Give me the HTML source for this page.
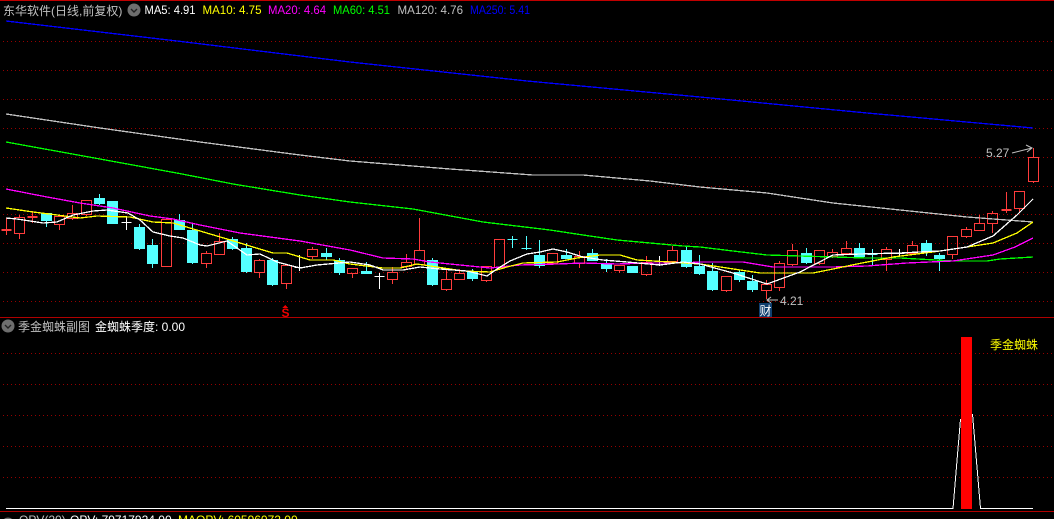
<!DOCTYPE html>
<html><head><meta charset="utf-8"><style>
html,body{margin:0;padding:0;background:#000;width:1054px;height:519px;overflow:hidden}
svg{display:block}
text{font-family:"Liberation Sans","WenQuanYi Zen Hei","Noto Sans CJK SC",sans-serif;font-size:12px}
</style></head><body>
<svg width="1054" height="519" viewBox="0 0 1054 519" xmlns="http://www.w3.org/2000/svg">
<rect width="1054" height="519" fill="#000"/>
<g shape-rendering="crispEdges">
<rect x="0" y="0" width="1054" height="1" fill="#c00000"/>
<rect x="0" y="317" width="1054" height="1" fill="#b00000"/>
<rect x="0" y="511" width="1054" height="1" fill="#b00000"/>
<path stroke="#960000" stroke-dasharray="1 3" fill="none" d="M3 41.5H1054M3 70.5H1054M3 99.5H1054M3 128.5H1054M3 157.5H1054M3 186.5H1054M3 214.5H1054M3 243.5H1054M3 272.5H1054M3 301.5H1054M3 353.5H1054M3 384.5H1054M3 415.5H1054M3 446.5H1054M3 477.5H1054"/>
<path fill="none" stroke="#ff3c3c" d="M14.5 217.5h10v16h-10zM19.5 215V217M19.5 234V239M54.5 216.5h10v8h-10zM59.5 224V230M67.5 213.5h10v5h-10zM72.5 205V213M72.5 218V220M81.5 200.5h10v14h-10zM86.5 214V216M161.5 219.5h10v47h-10zM166.5 218V219M201.5 253.5h10v10h-10zM206.5 251V253M206.5 263V268M214.5 241.5h10v13h-10zM219.5 233V241M254.5 260.5h10v12h-10zM259.5 259V260M259.5 272V278M281.5 265.5h10v18h-10zM286.5 283V289M307.5 249.5h10v7h-10zM312.5 247V249M312.5 256V259M347.5 268.5h10v5h-10zM352.5 273V278M387.5 272.5h10v7h-10zM392.5 267V272M392.5 279V284M401.5 262.5h10v4h-10zM406.5 254V262M406.5 266V270M414.5 250.5h10v14h-10zM419.5 218V250M441.5 279.5h10v10h-10zM446.5 270V279M446.5 289V291M454.5 273.5h10v6h-10zM459.5 269V273M481.5 266.5h10v14h-10zM486.5 280V282M494.5 239.5h10v28h-10zM547.5 253.5h10v10h-10zM574.5 256.5h10v7h-10zM579.5 251V256M579.5 263V268M614.5 265.5h10v5h-10zM619.5 270V273M641.5 262.5h10v12h-10zM646.5 256V262M646.5 274V276M667.5 250.5h10v11h-10zM672.5 246V250M721.5 276.5h10v14h-10zM726.5 290V292M761.5 284.5h10v6h-10zM766.5 280V284M766.5 290V299M774.5 263.5h10v24h-10zM779.5 261V263M779.5 287V291M787.5 250.5h10v14h-10zM792.5 244V250M792.5 264V266M814.5 250.5h10v13h-10zM819.5 263V265M827.5 252.5h10v4h-10zM832.5 249V252M832.5 256V258M841.5 248.5h10v5h-10zM846.5 241V248M881.5 249.5h10v10h-10zM886.5 247V249M886.5 259V271M907.5 245.5h10v8h-10zM912.5 241V245M947.5 236.5h10v18h-10zM952.5 254V259M961.5 229.5h10v7h-10zM966.5 227V229M966.5 236V238M974.5 223.5h10v7h-10zM979.5 215V223M987.5 213.5h10v10h-10zM992.5 211V213M992.5 223V233M1014.5 191.5h10v17h-10zM1019.5 208V213M1028.5 157.5h10v24h-10zM1033.5 148V157M1033.5 181V183M6.5 218V235M1.5 229.5h10M1.5 230.5h10M32.5 211V223M27.5 216.5h10M27.5 217.5h10M1006.5 192V213M1001.5 209.5h10M1001.5 210.5h10"/>
<path fill="#54ffff" stroke="#54ffff" d="M41.5 213.5h10v7h-10zM46.5 220V227M94.5 198.5h10v5h-10zM99.5 194V198M99.5 203V205M107.5 201.5h10v22h-10zM134.5 227.5h10v21h-10zM139.5 224V227M139.5 248V250M147.5 245.5h10v18h-10zM152.5 239V245M152.5 263V268M174.5 220.5h10v9h-10zM179.5 214V220M187.5 230.5h10v32h-10zM192.5 223V230M192.5 262V264M227.5 239.5h10v9h-10zM232.5 237V239M232.5 248V250M241.5 248.5h10v23h-10zM246.5 243V248M246.5 271V273M267.5 260.5h10v24h-10zM272.5 258V260M272.5 284V286M321.5 253.5h10v3h-10zM326.5 248V253M326.5 256V260M334.5 260.5h10v12h-10zM339.5 258V260M339.5 272V275M361.5 271.5h10v2h-10zM366.5 262V271M427.5 260.5h10v24h-10zM432.5 258V260M432.5 284V286M467.5 272.5h10v6h-10zM472.5 269V272M472.5 278V281M534.5 255.5h10v10h-10zM539.5 240V255M539.5 265V268M561.5 255.5h10v3h-10zM566.5 249V255M587.5 253.5h10v7h-10zM592.5 249V253M601.5 264.5h10v4h-10zM606.5 259V264M606.5 268V272M627.5 266.5h10v6h-10zM681.5 250.5h10v16h-10zM686.5 247V250M686.5 266V268M694.5 266.5h10v7h-10zM699.5 255V266M699.5 273V275M707.5 271.5h10v18h-10zM712.5 263V271M712.5 289V291M734.5 272.5h10v7h-10zM739.5 270V272M739.5 279V282M747.5 281.5h10v8h-10zM752.5 275V281M752.5 289V292M801.5 253.5h10v9h-10zM806.5 248V253M806.5 262V264M854.5 248.5h10v8h-10zM859.5 243V248M921.5 243.5h10v9h-10zM926.5 240V243M926.5 252V256M934.5 255.5h10v3h-10zM939.5 253V255M939.5 258V271M512.5 236V248M507.5 239.5h10M526.5 236V250M521.5 248.5h10M872.5 249V265M867.5 254.5h10"/>
<path fill="none" stroke="#fff" d="M126.5 216V230M121.5 222.5h10M299.5 255V271M294.5 267.5h10M379.5 273V289M374.5 276.5h10M659.5 256V266M654.5 261.5h10M899.5 249V256M894.5 253.5h10"/>
<g fill="none" stroke-width="1.3">
<polyline stroke="#0000ff" points="6,21 177,41 350,62 527,81 700,97 867,113 1033,128"/>
<polyline stroke="#c0c0c0" points="6,114 100,128 200,142 300,155 350,161 450,169 533,175 583,175 650,181 700,187 767,193 833,203 900,210 967,217 1033,222"/>
<polyline stroke="#00ff00" points="6,142 100,159 182,174 233,184 300,195 350,202 413,209 483,222 550,230 583,235 617,240 650,243 683,246 700,247 733,251 767,255 800,256 867,258 900,258 953,261 987,261 1000,259 1033,257"/>
<polyline stroke="#ff00ff" points="6,189 47,197 80,203 113,208 150,216 173,219 200,225 240,233 300,241 350,250 383,258 413,259 430,262 460,265 490,268 520,265 557,264 583,263 617,264 650,263 683,263 700,262 743,262 773,267 833,267 867,266 907,263 953,261 993,255 1015,247 1033,238"/>
<polyline stroke="#ffff00" points="6,208 33,212 57,215 80,218 97,216 130,217 153,222 173,223 200,231 227,239 253,247 273,253 287,253 310,260 333,260 350,264 383,268 400,268 417,264 437,267 463,271 490,272 507,267 523,263 557,262 577,258 600,255 620,255 637,260 670,262 700,264 727,268 760,273 813,273 833,269 857,264 893,257 933,252 967,247 993,243 1017,233 1033,222"/>
<polyline stroke="#ffffff" points="6,218 17,219 43,223 57,222 73,215 93,211 107,210 128,213 140,220 153,232 170,236 183,238 200,245 207,246 227,241 247,255 260,254 277,262 300,268 317,265 350,262 370,265 383,270 403,270 420,267 440,269 467,271 487,276 497,269 510,261 527,254 540,252 553,249 567,252 583,257 603,260 627,262 660,265 683,262 700,264 733,273 767,284 800,272 833,255 860,254 900,253 940,251 967,247 993,236 1017,215 1033,199"/>
</g>
<path fill="none" stroke="#fff" d="M6 508.5H953L960.5 419M972.5 414L980.5 508.5H1033"/>
<rect x="961" y="337" width="11" height="172" fill="#ff0000"/>
<rect x="759" y="303" width="13" height="14" fill="#0f3f6f"/>
</g>
<g fill="none" stroke="#c0c0c0">
<path d="M1012 153L1032 148M1026 145L1032 148L1027 152"/>
<path d="M778 300H767M771 297L767 300L771 303"/>
</g>
<circle cx="134" cy="10" r="6.5" fill="#6e6e6e"/><path d="M131 9l3 3 3-3" fill="none" stroke="#222" stroke-width="1.4"/>
<circle cx="8" cy="326" r="6.5" fill="#6e6e6e"/><path d="M5 325l3 3 3-3" fill="none" stroke="#222" stroke-width="1.4"/>
<circle cx="8" cy="524" r="6.5" fill="#6e6e6e"/>
<path d="M285 305l3 3h-6z" fill="#f00000" shape-rendering="crispEdges"/>
<text x="281.500" y="317" fill="#f00000" style="font-size:12px;font-weight:bold">S</text>
<text x="3" y="15" fill="#c0c0c0">东华软件(日线,前复权)</text>
<text x="144.500" y="14" fill="#fff" textLength="51" lengthAdjust="spacingAndGlyphs">MA5: 4.91</text>
<text x="202.500" y="14" fill="#ff0" textLength="59" lengthAdjust="spacingAndGlyphs">MA10: 4.75</text>
<text x="268" y="14" fill="#f0f" textLength="58" lengthAdjust="spacingAndGlyphs">MA20: 4.64</text>
<text x="333" y="14" fill="#0f0" textLength="57" lengthAdjust="spacingAndGlyphs">MA60: 4.51</text>
<text x="397.500" y="14" fill="#c0c0c0" textLength="65.500" lengthAdjust="spacingAndGlyphs">MA120: 4.76</text>
<text x="470" y="14" fill="#0000ff" textLength="60" lengthAdjust="spacingAndGlyphs">MA250: 5.41</text>
<text x="18" y="331" fill="#c0c0c0">季金蜘蛛副图</text>
<text x="95" y="331" fill="#fff">金蜘蛛季度: 0.00</text>
<text x="990" y="349" fill="#ff0">季金蜘蛛</text>
<text x="986" y="157" fill="#c0c0c0">5.27</text>
<text x="780" y="305" fill="#c0c0c0">4.21</text>
<text x="759.500" y="315" fill="#fff">财</text>
<text x="19" y="524" fill="#c0c0c0">OPV(20)</text>
<text x="70" y="524" fill="#fff">OPV: 79717924.00</text>
<text x="178" y="524" fill="#ff0">MAOPV: 60596072.00</text>
</svg>
</body></html>
